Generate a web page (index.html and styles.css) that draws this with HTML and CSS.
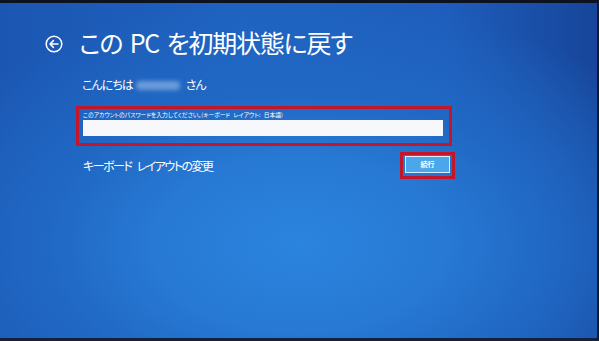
FILE: index.html
```html
<!DOCTYPE html>
<html lang="ja">
<head>
<meta charset="utf-8">
<link rel="stylesheet" href="styles.css">
</head>
<body>
<div class="screen">
  <div class="header">
    <svg class="back" width="18" height="18" viewBox="0 0 18 18">
      <circle cx="9" cy="9" r="7.8" fill="none" stroke="#fff" stroke-width="1.5"/>
      <path d="M13 9H5.2M8.4 5.6L5 9l3.4 3.4" fill="none" stroke="#fff" stroke-width="1.5" stroke-linecap="round" stroke-linejoin="round"/>
    </svg>
    <h1 class="title">この PC を初期状態に戻す</h1>
  </div>
  <div class="content">
    <p class="greeting">こんにちは<span class="name"></span>さん</p>
    <div class="pw-box">
      <div class="pw-label">このアカウントのパスワードを入力してください。(キーボード レイアウト: 日本語)</div>
      <div class="pw-input"></div>
    </div>
    <div class="row">
      <span class="link">キーボード レイアウトの変更</span>
      <div class="btn-box"><div class="btn">続行</div></div>
    </div>
  </div>
</div>
</body>
</html>
```
FILE: styles.css
```css
html, body {
  margin: 0;
  padding: 0;
  background: #0b1120;
}
.screen {
  box-sizing: border-box;
  width: 599px;
  height: 341px;
  border-top: 3px solid #0d1220;
  border-bottom: 3px solid #13213f;
  border-right: 2px solid #0f1a33;
  background:
    radial-gradient(ellipse 70% 75% at 50% 72%, #2b84de 0%, #2779d3 35%, #2068c4 60%, rgba(30,90,180,0) 100%),
    linear-gradient(90deg, #1b56b2 0%, #1f62bf 40%, #1e5dbb 75%, #17459a 100%);
  color: #fff;
  font-family: "Noto Sans CJK JP", "Noto Sans", sans-serif;
  font-feature-settings: "palt";
  overflow: hidden;
}
.header {
  display: flex;
  align-items: center;
  gap: 16px;
  padding: 21px 0 0 45px;
  height: 36px;
}
.back {
  display: block;
  margin-top: 3px;
}
.title {
  margin: 0;
  font-size: 25px;
  font-weight: 400;
  line-height: 36px;
  letter-spacing: -1.2px;
  word-spacing: 3px;
  white-space: nowrap;
}
.content {
  padding-left: 76px;
}
.greeting {
  display: flex;
  align-items: center;
  margin: 17px 0 0 6px;
  font-size: 12px;
  line-height: 16px;
  height: 16px;
  letter-spacing: -1px;
}
.name {
  display: block;
  width: 44px;
  height: 9px;
  margin: 1px 6px 0 3px;
  background: rgba(170, 200, 240, 0.55);
  filter: blur(2px);
  border-radius: 4px;
}
.pw-box {
  box-sizing: border-box;
  width: 376px;
  height: 40px;
  margin-top: 13px;
  border: 3px solid #c4162b;
  padding: 2px 6px 0 4px;
}
.pw-label {
  font-size: 5.8px;
  line-height: 8px;
  height: 8px;
  white-space: nowrap;
  word-spacing: 2px;
}
.pw-input {
  margin-top: 1px;
  width: 360px;
  height: 16px;
  background: #f6f8fb;
}
.row {
  display: flex;
  justify-content: space-between;
  align-items: center;
  width: 379px;
  margin-top: 6px;
}
.link {
  font-size: 12px;
  line-height: 16px;
  padding-left: 7px;
  letter-spacing: -1.5px;
  word-spacing: 4px;
}
.btn-box {
  box-sizing: border-box;
  width: 55px;
  height: 27px;
  border: 3px solid #c4162b;
  padding: 1px 0 0 2px;
}
.btn {
  box-sizing: border-box;
  width: 45px;
  height: 17px;
  background: #4ba7ec;
  border: 1.5px solid #d8ecfb;
  font-size: 7px;
  line-height: 14px;
  text-align: center;
  font-weight: 700;
}
```
